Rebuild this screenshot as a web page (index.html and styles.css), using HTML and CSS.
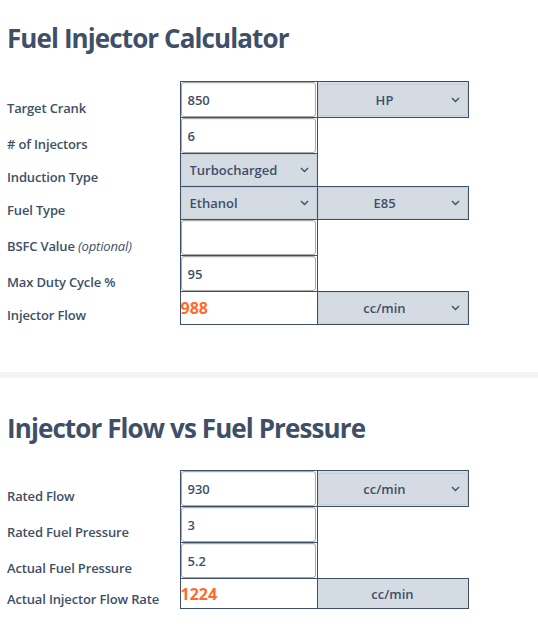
FILE: index.html
```html
<!DOCTYPE html>
<html lang="en">
<head>
<meta charset="utf-8">
<title>Fuel Injector Calculator</title>
<link rel="stylesheet" href="styles.css">
</head>
<body>
<section class="calc calc-first">
  <h1 class="calc-title">Fuel Injector Calculator</h1>
  <table class="calc-table">
    <colgroup><col class="c-label"><col class="c-main"><col class="c-unit"></colgroup>
    <tr class="r-input">
      <td class="lbl">Target Crank</td>
      <td class="cell"><input class="inp" type="text" value="850"></td>
      <td class="cell sel-cell"><div class="sel-wrap center"><select class="sel"><option>HP</option></select><svg class="chev" width="9" height="6" viewBox="0 0 9 6"><path d="M1 1l3.5 3.5L8 1" fill="none" stroke="#3e4f67" stroke-width="1.4"/></svg></div></td>
    </tr>
    <tr class="r-input">
      <td class="lbl"># of Injectors</td>
      <td class="cell"><input class="inp" type="text" value="6"></td>
      <td class="empty"></td>
    </tr>
    <tr class="r-sel">
      <td class="lbl">Induction Type</td>
      <td class="cell sel-cell"><div class="sel-wrap"><select class="sel"><option>Turbocharged</option></select><svg class="chev" width="9" height="6" viewBox="0 0 9 6"><path d="M1 1l3.5 3.5L8 1" fill="none" stroke="#3e4f67" stroke-width="1.4"/></svg></div></td>
      <td class="empty"></td>
    </tr>
    <tr class="r-sel">
      <td class="lbl">Fuel Type</td>
      <td class="cell sel-cell"><div class="sel-wrap"><select class="sel"><option>Ethanol</option></select><svg class="chev" width="9" height="6" viewBox="0 0 9 6"><path d="M1 1l3.5 3.5L8 1" fill="none" stroke="#3e4f67" stroke-width="1.4"/></svg></div></td>
      <td class="cell sel-cell"><div class="sel-wrap center"><select class="sel"><option>E85</option></select><svg class="chev" width="9" height="6" viewBox="0 0 9 6"><path d="M1 1l3.5 3.5L8 1" fill="none" stroke="#3e4f67" stroke-width="1.4"/></svg></div></td>
    </tr>
    <tr class="r-input">
      <td class="lbl">BSFC Value <em class="opt">(optional)</em></td>
      <td class="cell"><input class="inp" type="text" value=""></td>
      <td class="empty"></td>
    </tr>
    <tr class="r-input">
      <td class="lbl">Max Duty Cycle %</td>
      <td class="cell"><input class="inp" type="text" value="95"></td>
      <td class="empty"></td>
    </tr>
    <tr class="r-sel">
      <td class="lbl">Injector Flow</td>
      <td class="cell out">988</td>
      <td class="cell sel-cell"><div class="sel-wrap center"><select class="sel"><option>cc/min</option></select><svg class="chev" width="9" height="6" viewBox="0 0 9 6"><path d="M1 1l3.5 3.5L8 1" fill="none" stroke="#3e4f67" stroke-width="1.4"/></svg></div></td>
    </tr>
  </table>
</section>
<div class="divider"></div>
<section class="calc calc-second">
  <h2 class="calc-title">Injector Flow vs Fuel Pressure</h2>
  <table class="calc-table">
    <colgroup><col class="c-label"><col class="c-main"><col class="c-unit"></colgroup>
    <tr class="r-input">
      <td class="lbl">Rated Flow</td>
      <td class="cell"><input class="inp" type="text" value="930"></td>
      <td class="cell sel-cell"><div class="sel-wrap center"><select class="sel"><option>cc/min</option></select><svg class="chev" width="9" height="6" viewBox="0 0 9 6"><path d="M1 1l3.5 3.5L8 1" fill="none" stroke="#3e4f67" stroke-width="1.4"/></svg></div></td>
    </tr>
    <tr class="r-input">
      <td class="lbl">Rated Fuel Pressure</td>
      <td class="cell"><input class="inp" type="text" value="3"></td>
      <td class="empty"></td>
    </tr>
    <tr class="r-input">
      <td class="lbl">Actual Fuel Pressure</td>
      <td class="cell"><input class="inp" type="text" value="5.2"></td>
      <td class="empty"></td>
    </tr>
    <tr class="r-out">
      <td class="lbl lbl-last">Actual Injector Flow Rate</td>
      <td class="cell out">1224</td>
      <td class="cell unit-out">cc/min</td>
    </tr>
  </table>
</section>
</body>
</html>
```
FILE: styles.css
```css
html, body {
  margin: 0;
  padding: 0;
  background: #ffffff;
}
body {
  font-family: "Open Sans", "Liberation Sans", sans-serif;
  color: #3e4f67;
}
.calc {
  padding: 0 7px;
}
.calc-first {
  padding-top: 20px;
  padding-bottom: 47px;
}
.calc-second {
  padding-top: 32px;
}
.calc-title {
  margin: 0 0 25px;
  font-size: 26px;
  line-height: 36px;
  font-weight: 700;
  letter-spacing: -0.9px;
  color: #3e4f67;
}
.calc-second .calc-title {
  margin-bottom: 24px;
}
.divider {
  height: 6px;
  background: #f3f3f3;
}
.calc-table {
  border-collapse: collapse;
  table-layout: fixed;
  width: 461px;
}
.c-label { width: 173px; }
.c-main { width: 137px; }
.c-unit { width: 151px; }
.calc-table td {
  padding: 0;
}
.calc-table td.lbl {
  vertical-align: bottom;
  padding-bottom: 1px;
  font-size: 13px;
  font-weight: 600;
  line-height: 18px;
  letter-spacing: -0.15px;
  white-space: nowrap;
}
.calc-second .calc-table td.lbl {
  padding-bottom: 2px;
}
.calc-second .calc-table td.lbl-last {
  padding-bottom: 1px;
}
.opt {
  font-weight: 400;
  font-style: italic;
}
.cell {
  border: 1px solid #3e4f67;
  vertical-align: middle;
}
.empty {
  border: none;
}
.r-input { height: 36px; }
.r-sel { height: 33px; }
.r-out { height: 30px; }
.inp {
  display: block;
  box-sizing: border-box;
  width: 135px;
  height: 35px;
  margin: 0;
  padding: 0 6px;
  border: 1px solid #a9a9a9;
  border-radius: 3px;
  box-shadow: inset 0 1px 1px rgba(0,0,0,0.08);
  font-family: inherit;
  font-size: 13px;
  font-weight: 600;
  color: #3e4f67;
  background: #ffffff;
  outline: none;
}
.sel-cell {
  background: #d5dbe3;
}
.sel-wrap {
  position: relative;
}
.sel {
  display: block;
  box-sizing: border-box;
  width: 100%;
  height: 32px;
  margin: 0;
  padding: 0 24px 0 8px;
  border: 1px solid #c9cfd8;
  border-radius: 3px;
  background: #d5dbe3;
  -webkit-appearance: none;
  appearance: none;
  font-family: inherit;
  font-size: 13px;
  font-weight: 600;
  color: #3e4f67;
  outline: none;
}
.sel-wrap.center .sel {
  text-align: center;
  text-align-last: center;
  padding: 0 20px 0 4px;
}
.chev {
  position: absolute;
  right: 8px;
  top: 13px;
  pointer-events: none;
}
.out {
  font-size: 16px;
  font-weight: 700;
  color: #ff6a2b;
  line-height: 20px;
}
.unit-out {
  background: #d5dbe3;
  text-align: center;
  font-size: 13px;
  font-weight: 600;
}
```
